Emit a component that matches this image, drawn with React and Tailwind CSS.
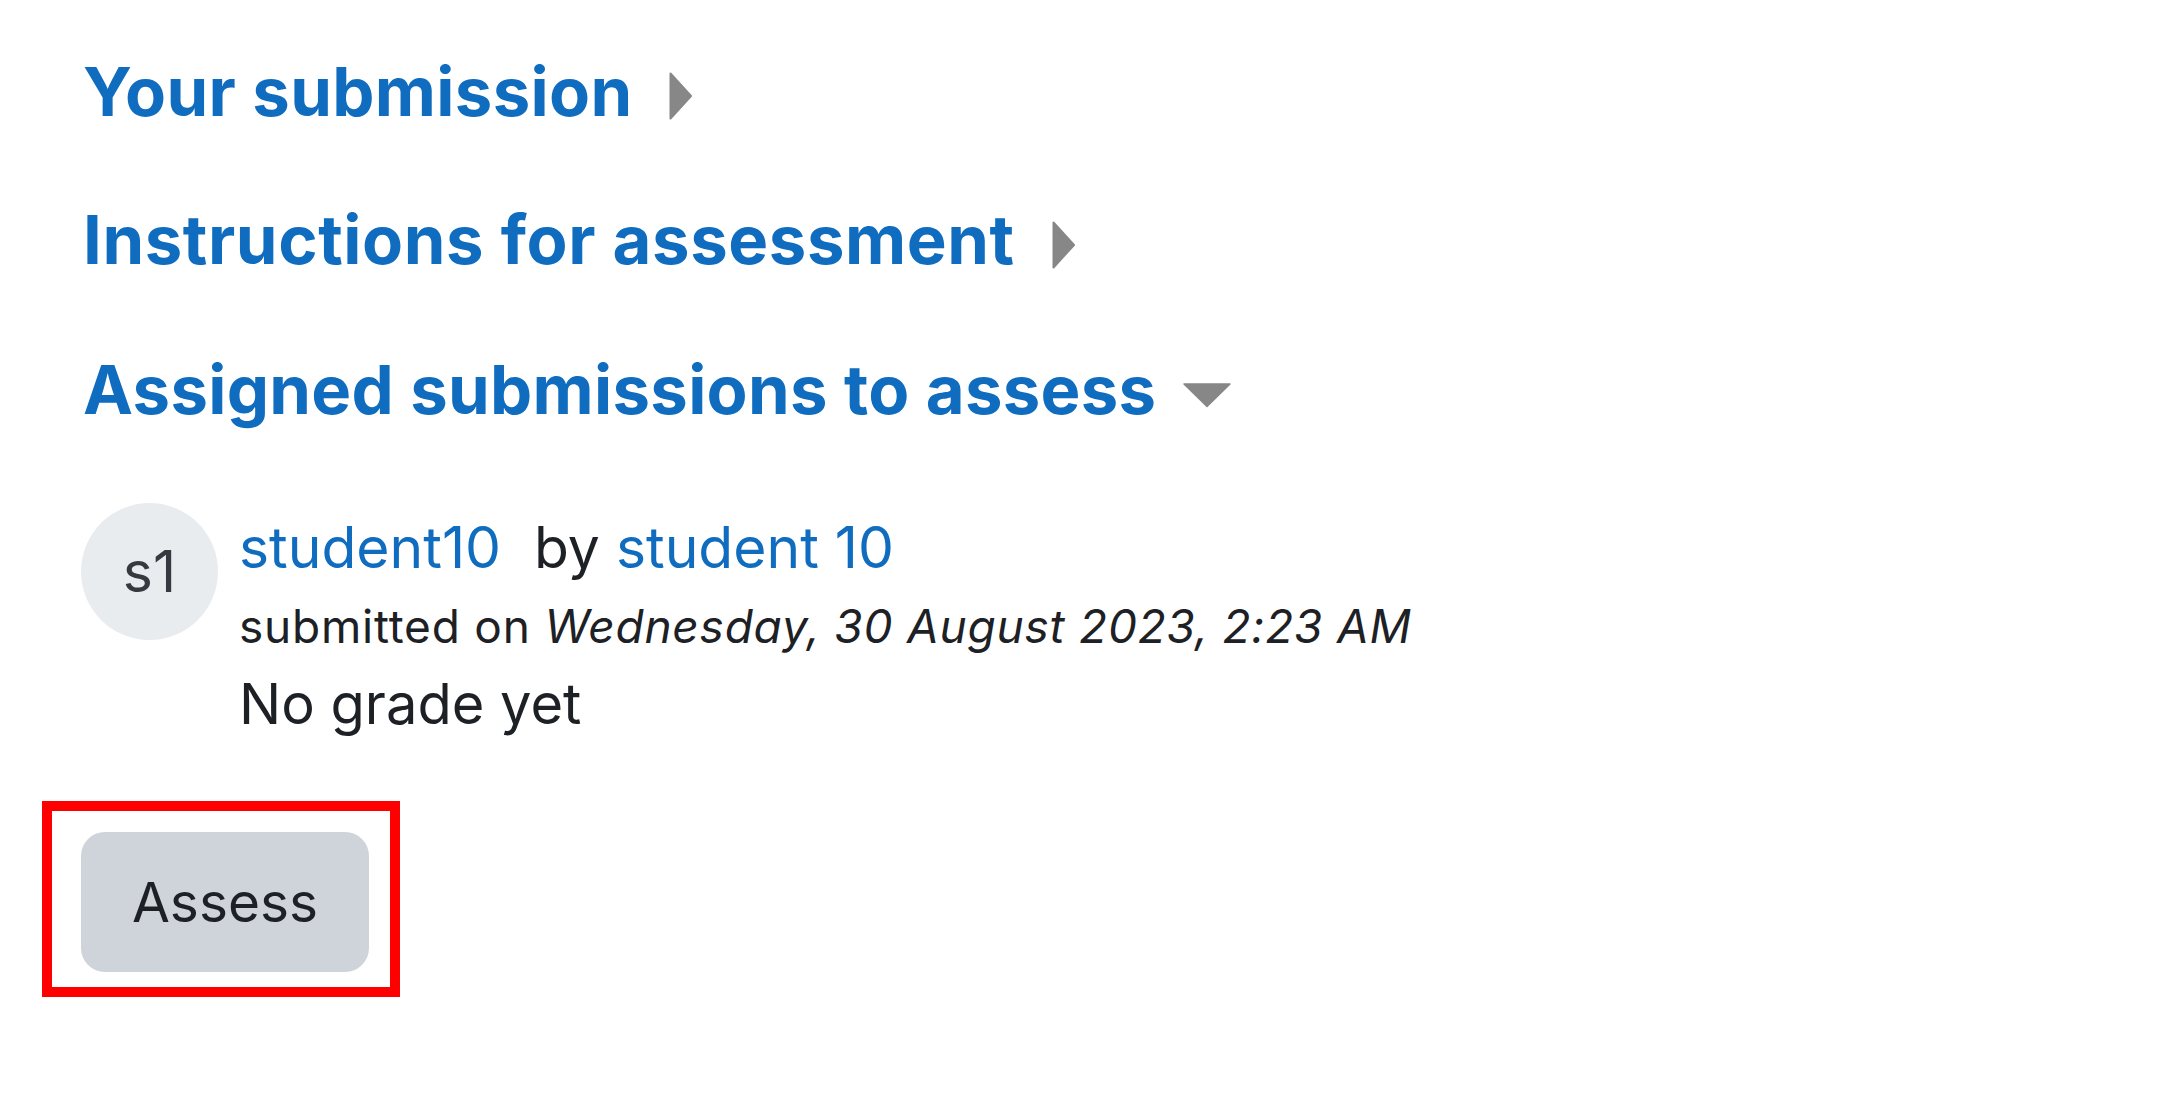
import React from "react";

function CaretRight() {
  return (
    <svg width="24" height="48" viewBox="0 0 24 48" className="block">
      <path d="M1.5 1.5 L22 24 L1.5 46.5 Z" fill="#878787" stroke="#878787" strokeWidth="2" strokeLinejoin="round" />
    </svg>
  );
}

function CaretDown() {
  return (
    <svg width="48" height="25" viewBox="0 0 48 25" className="block">
      <path d="M1 1 L47 1 L24 23.5 Z" fill="#878787" stroke="#878787" strokeWidth="1.5" strokeLinejoin="round" />
    </svg>
  );
}

export default function App() {
  const font = { fontFamily: "Inter, 'Noto Sans', 'Liberation Sans', sans-serif" };
  return (
    <div className="min-h-[1115px] w-full bg-white pl-[83px] pt-[52px] text-[#1d2125]" style={font}>
      <div className="flex items-center">
        <a className="text-[67px] font-bold leading-[80px] text-[#0f6cbf] tracking-[0.35px]">Your submission</a>
        <span className="ml-[36px] mt-[8px]"><CaretRight /></span>
      </div>
      <div className="mt-[68px] flex items-center">
        <a className="text-[67px] font-bold leading-[80px] text-[#0f6cbf] tracking-[0.6px]">Instructions for assessment</a>
        <span className="ml-[37px] mt-[10px]"><CaretRight /></span>
      </div>
      <div className="mt-[70px] flex items-center">
        <a className="text-[67px] font-bold leading-[80px] text-[#0f6cbf] tracking-[0.3px]">Assigned submissions to assess</a>
        <span className="ml-[27px] mt-[10px]"><CaretDown /></span>
      </div>

      <div className="mt-[73px] flex items-start">
        <div className="ml-[-2px] flex h-[137px] w-[137px] shrink-0 items-center justify-center rounded-full bg-[#e9ecef] text-[57px] text-[#343a40]">
          s1
        </div>
        <div className="ml-[21px] pt-[11px]">
          <div className="text-[57px] leading-[68px] whitespace-nowrap">
            <a className="text-[#0f6cbf]">student10</a>
            <span className="ml-[33px]">by </span>
            <a className="text-[#0f6cbf]">student 10</a>
          </div>
          <div className="mt-[14px] text-[46px] leading-[60px] whitespace-nowrap tracking-[0.78px]">
            submitted on <em>Wednesday, 30 August 2023, 2:23 AM</em>
          </div>
          <div className="mt-[14px] text-[56px] leading-[68px] whitespace-nowrap">No grade yet</div>
        </div>
      </div>

      <div className="relative mt-[94px] ml-[-2px] inline-block">
        <button className="flex h-[140px] w-[288px] items-center justify-center rounded-[24px] bg-[#ced4da] text-[55px] text-[#1d2125]">
          Assess
        </button>
        <div className="pointer-events-none absolute left-[-39px] top-[-31px] h-[196px] w-[358px] border-[10px] border-[#ff0000]"></div>
      </div>
    </div>
  );
}
